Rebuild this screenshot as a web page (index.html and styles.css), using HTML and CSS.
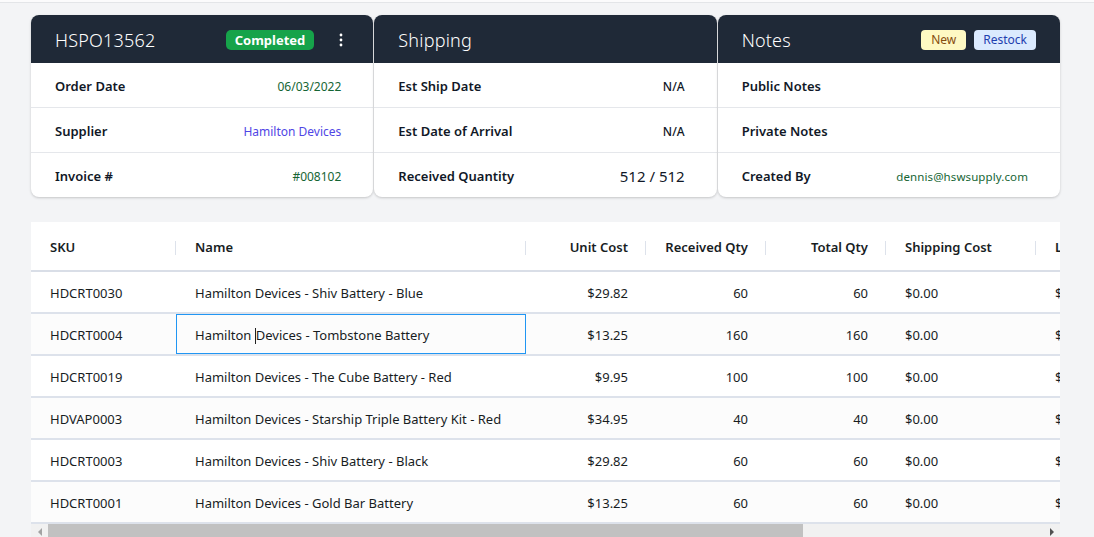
FILE: index.html
```html
<!DOCTYPE html>
<html lang="en">
<head>
<meta charset="utf-8">
<title>HSPO13562</title>
<link rel="stylesheet" href="styles.css">
</head>
<body>
<div class="topbar"></div>
<main class="page">
  <section class="cards">
    <div class="card">
      <div class="card-head">
        <h2 class="card-title">HSPO13562</h2>
        <div class="head-tools">
          <span class="badge badge-green">Completed</span>
          <svg class="kebab" width="4" height="14" viewBox="0 0 4 14"><circle cx="2" cy="2" r="1.4" fill="#fff"/><circle cx="2" cy="7" r="1.4" fill="#fff"/><circle cx="2" cy="12" r="1.4" fill="#fff"/></svg>
        </div>
      </div>
      <div class="card-row"><span class="label">Order Date</span><span class="val green">06/03/2022</span></div>
      <div class="card-row"><span class="label">Supplier</span><span class="val indigo">Hamilton Devices</span></div>
      <div class="card-row last"><span class="label">Invoice #</span><span class="val green">#008102</span></div>
    </div>
    <div class="card">
      <div class="card-head">
        <h2 class="card-title">Shipping</h2>
      </div>
      <div class="card-row"><span class="label">Est Ship Date</span><span class="val dark">N/A</span></div>
      <div class="card-row"><span class="label">Est Date of Arrival</span><span class="val dark">N/A</span></div>
      <div class="card-row last"><span class="label">Received Quantity</span><span class="val big">512 / 512</span></div>
    </div>
    <div class="card">
      <div class="card-head">
        <h2 class="card-title">Notes</h2>
        <div class="head-tools tags">
          <span class="badge badge-yellow">New</span>
          <span class="badge badge-blue">Restock</span>
        </div>
      </div>
      <div class="card-row"><span class="label">Public Notes</span></div>
      <div class="card-row"><span class="label">Private Notes</span></div>
      <div class="card-row last"><span class="label">Created By</span><span class="val green email">dennis@hswsupply.com</span></div>
    </div>
  </section>

  <section class="grid-card">
    <div class="grid-clip">
      <table class="grid">
        <colgroup>
          <col class="c-sku"><col class="c-name"><col class="c-num"><col class="c-num"><col class="c-num"><col class="c-ship"><col class="c-land">
        </colgroup>
        <thead>
          <tr>
            <th class="left">SKU</th>
            <th class="left">Name</th>
            <th class="right">Unit Cost</th>
            <th class="right">Received Qty</th>
            <th class="right">Total Qty</th>
            <th class="left">Shipping Cost</th>
            <th class="left">Landed Cost</th>
          </tr>
        </thead>
        <tbody>
          <tr><td>HDCRT0030</td><td>Hamilton Devices - Shiv Battery - Blue</td><td class="right">$29.82</td><td class="right">60</td><td class="right">60</td><td>$0.00</td><td>$29.82</td></tr>
          <tr class="alt"><td>HDCRT0004</td><td class="focused">Hamilton <span class="caret"></span>Devices - Tombstone Battery</td><td class="right">$13.25</td><td class="right">160</td><td class="right">160</td><td>$0.00</td><td>$13.25</td></tr>
          <tr><td>HDCRT0019</td><td>Hamilton Devices - The Cube Battery - Red</td><td class="right">$9.95</td><td class="right">100</td><td class="right">100</td><td>$0.00</td><td>$9.95</td></tr>
          <tr class="alt"><td>HDVAP0003</td><td>Hamilton Devices - Starship Triple Battery Kit - Red</td><td class="right">$34.95</td><td class="right">40</td><td class="right">40</td><td>$0.00</td><td>$34.95</td></tr>
          <tr><td>HDCRT0003</td><td>Hamilton Devices - Shiv Battery - Black</td><td class="right">$29.82</td><td class="right">60</td><td class="right">60</td><td>$0.00</td><td>$29.82</td></tr>
          <tr class="alt"><td>HDCRT0001</td><td>Hamilton Devices - Gold Bar Battery</td><td class="right">$13.25</td><td class="right">60</td><td class="right">60</td><td>$0.00</td><td>$13.25</td></tr>
        </tbody>
      </table>
    </div>
    <div class="hscroll">
      <span class="arrow arrow-left"></span>
      <div class="track"><div class="thumb"></div></div>
      <span class="arrow arrow-right"></span>
    </div>
  </section>
</main>
</body>
</html>
```

FILE: styles.css
```css
* { box-sizing: border-box; }

html, body {
  margin: 0;
  padding: 0;
  height: 100%;
  overflow: hidden;
}

body {
  background: #f3f4f6;
  font-family: "Noto Sans", "Open Sans", sans-serif;
  color: #111827;
}

.topbar {
  height: 3px;
  background: #fbfbfc;
  border-bottom: 1px solid #e3e5e8;
}

.page {
  padding: 12px 34px 0 31px;
}

/* ---------- summary cards ---------- */
.cards {
  display: grid;
  grid-template-columns: repeat(3, 1fr);
  gap: 1px;
}

.card {
  background: #fff;
  border-radius: 8px;
  box-shadow: 0 1px 3px rgba(0, 0, 0, 0.14), 0 1px 2px rgba(0, 0, 0, 0.06);
  overflow: hidden;
}

.card-head {
  height: 48px;
  background: #1f2937;
  display: flex;
  align-items: center;
  justify-content: space-between;
  padding: 2px 24px 0 24px;
}

.card-title {
  margin: 0;
  font-size: 18px;
  font-weight: 300;
  color: #fff;
  letter-spacing: 0.2px;
}

.head-tools {
  display: flex;
  align-items: center;
  gap: 25px;
  padding-right: 6px;
}

.head-tools.tags {
  gap: 8px;
  padding-right: 0;
}

.badge {
  display: inline-flex;
  align-items: center;
  height: 20px;
  border-radius: 4px;
  font-size: 12px;
  line-height: 1;
}

.badge-green {
  background: #16a34a;
  color: #fff;
  font-weight: 700;
  font-size: 13px;
  padding: 0 9px;
  border-radius: 5px;
}

.badge-yellow {
  background: #fef9c3;
  color: #854d0e;
  padding: 0 10px;
}

.badge-blue {
  background: #dbeafe;
  color: #1e40af;
  padding: 0 9px;
}

.kebab { display: block; }

.card-row {
  height: 45px;
  display: flex;
  align-items: center;
  justify-content: space-between;
  padding: 2px 32px 0 24px;
  border-bottom: 1px solid #e5e7eb;
}

.card-row.last { border-bottom: 0; height: 44px; }

.label {
  font-size: 13px;
  font-weight: 600;
  color: #111827;
}

.val {
  font-size: 12px;
}

.email { font-size: 11.5px; letter-spacing: 0.1px; }

.green { color: #166534; }
.indigo { color: #4f46e5; }
.dark { color: #111827; font-weight: 500; }
.big { font-size: 15px; color: #111827; }

/* ---------- grid ---------- */
.grid-card {
  margin-top: 25px;
  background: #fff;
}

.grid-clip {
  overflow: hidden;
}

.grid {
  border-collapse: collapse;
  table-layout: fixed;
  width: 1155px;
  font-size: 13px;
  color: #181d1f;
}

.c-sku { width: 145px; }
.c-name { width: 350px; }
.c-num { width: 120px; }
.c-ship { width: 150px; }
.c-land { width: 150px; }

.grid th {
  height: 49px;
  padding: 1px 18px 0 19px;
  font-weight: 600;
  font-size: 13px;
  color: #181d1f;
  border-bottom: 2px solid #d9dee7;
  background: linear-gradient(#dde2eb, #dde2eb) right 55% / 1px 14px no-repeat;
  white-space: nowrap;
}

.grid td {
  height: 42px;
  padding: 1px 18px 0 19px;
  border-bottom: 2px solid #dde2eb;
  white-space: nowrap;
  overflow: hidden;
}

.grid .left { text-align: left; }
.grid .right { text-align: right; }

.grid tr.alt td { background: #fcfcfc; }

.grid td.focused {
  box-shadow: inset 0 0 0 1px #2196f3;
}

.caret {
  display: inline-block;
  width: 0;
  height: 16px;
  border-left: 1px solid #222;
  vertical-align: -4px;
}

/* ---------- fake horizontal scrollbar ---------- */
.hscroll {
  height: 15px;
  display: flex;
  align-items: stretch;
  background: #f1f1f1;
}

.track {
  flex: 1;
}

.thumb {
  width: 755px;
  height: 100%;
  background: #c1c1c1;
}

.arrow {
  width: 17px;
  display: flex;
  align-items: center;
  justify-content: center;
}

.arrow::before {
  content: "";
  border-top: 4px solid transparent;
  border-bottom: 4px solid transparent;
}

.arrow-left::before { border-right: 4px solid #a3a3a3; }
.arrow-right::before { border-left: 4px solid #505050; }
```
